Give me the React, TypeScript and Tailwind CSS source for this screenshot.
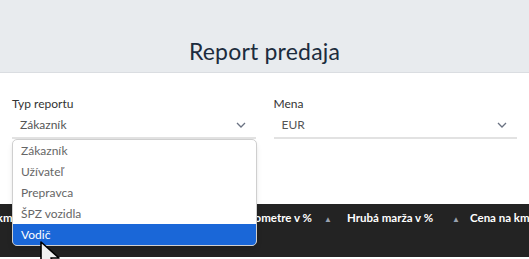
const font = { fontFamily: 'Lato, "Noto Sans", sans-serif' };

function Chevron() {
  return (
    <svg width="10" height="6" viewBox="0 0 10 6" className="text-gray-500">
      <path d="M1 1l4 4 4-4" fill="none" stroke="currentColor" strokeWidth="1.3" />
    </svg>
  );
}

function Arrow() {
  return <span className="text-[8px] text-gray-400">▲</span>;
}

const options = ['Zákazník', 'Užívateľ', 'Prepravca', 'ŠPZ vozidla', 'Vodič'];

export default function App() {
  return (
    <div className="relative w-[529px] h-[259px] overflow-hidden bg-white" style={font}>
      {/* hlavička */}
      <div className="h-[73px] bg-[#e8ebee] border-b border-[#dadde1] flex items-end justify-center pb-[9px]">
        <h1 className="text-[23px] leading-none tracking-[0.2px] text-[#1c2c3d]">Report predaja</h1>
      </div>

      {/* filtre */}
      <div className="flex gap-[18px] px-[12px] pt-[24px]">
        <div className="w-[245px]">
          <div className="text-[12px] leading-[14px] text-[#333]">Typ reportu</div>
          <div className="flex items-center justify-between h-[28px] pl-[8px] pr-[10px] pt-[2px] border-b-2 border-[#e2e2e2]">
            <span className="text-[12px] text-[#555]">Zákazník</span>
            <Chevron />
          </div>
        </div>
        <div className="w-[245px]">
          <div className="text-[12px] leading-[14px] text-[#333]">Mena</div>
          <div className="flex items-center justify-between h-[28px] pl-[8px] pr-[10px] pt-[2px] border-b-2 border-[#e2e2e2]">
            <span className="text-[12px] text-[#555]">EUR</span>
            <Chevron />
          </div>
        </div>
      </div>

      {/* hlavička tabuľky */}
      <div className="mt-[65px] h-[53px] bg-[#232323] overflow-hidden">
        <div className="flex items-center h-[27px] text-[11.5px] font-bold text-white whitespace-nowrap">
          <div className="w-[312px] shrink-0 flex justify-between">
            <span className="-ml-[47px]">Cena na km</span>
            <span>Zisk na kilometre v %</span>
          </div>
          <div className="w-[35px] shrink-0 pl-[12px]"><Arrow /></div>
          <div className="w-[105px] shrink-0">Hrubá marža v %</div>
          <div className="w-[18px] shrink-0"><Arrow /></div>
          <div className="shrink-0">Cena na km</div>
        </div>
      </div>

      {/* rozbalený zoznam */}
      <div className="absolute left-[12px] top-[139px] w-[245px] bg-white border border-[#cfcfcf] rounded-[5px] shadow-md overflow-hidden">
        {options.map((o) => (
          <div
            key={o}
            className={`h-[21px] flex items-center pl-[8px] text-[12px] ${
              o === 'Vodič' ? 'bg-[#1a67d8] text-white' : 'text-[#666]'
            }`}
          >
            {o}
          </div>
        ))}
      </div>

      {/* kurzor */}
      <svg className="absolute left-[40px] top-[241px]" width="22" height="30" viewBox="0 0 22 30">
        <path d="M1 1v24l6-6 4 9 4-2-4-9h8z" fill="#f0f0f0" stroke="#000" strokeWidth="1.6" strokeLinejoin="round" />
      </svg>
    </div>
  );
}
